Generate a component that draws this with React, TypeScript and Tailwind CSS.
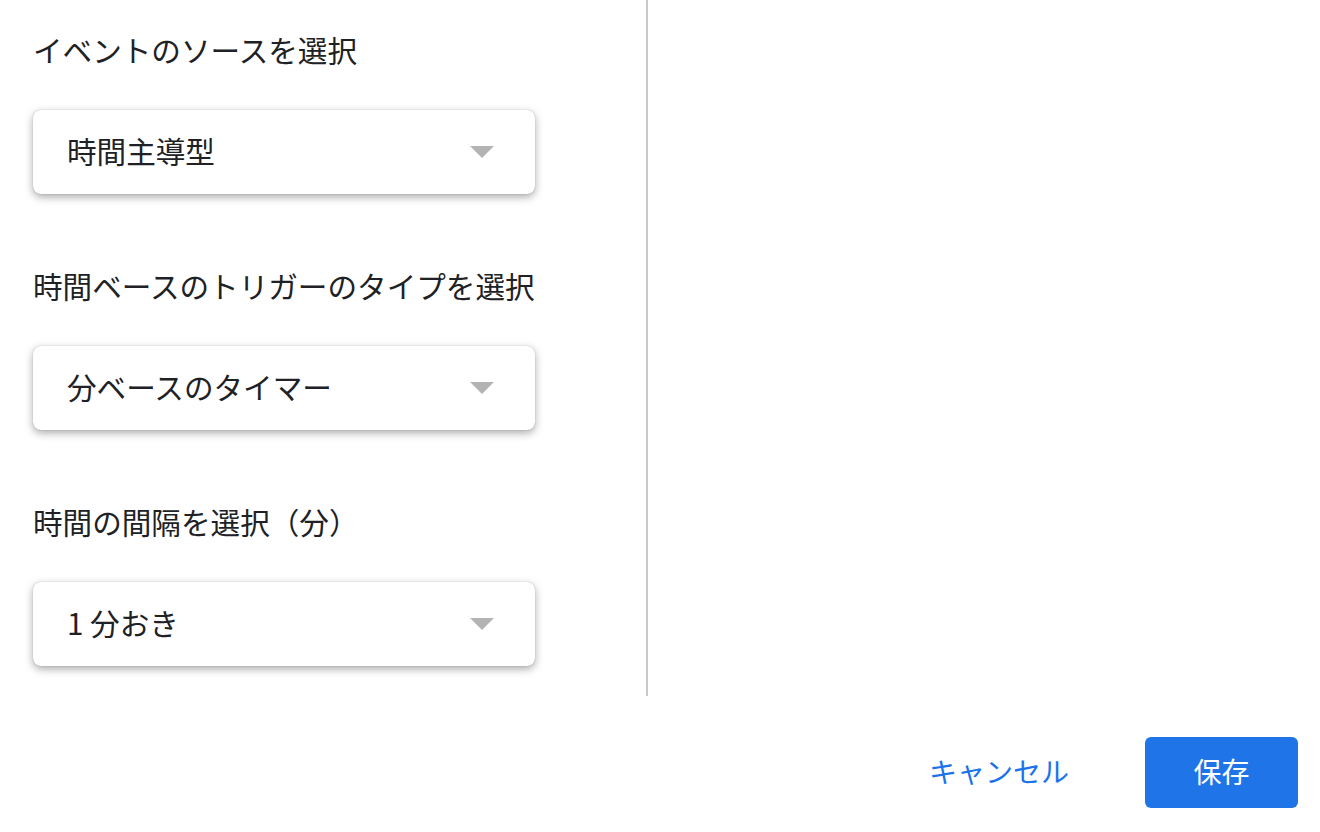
const font = { fontFamily: '"Noto Sans CJK JP", "Noto Sans", sans-serif' };

const fields = [
  { label: 'イベントのソースを選択', value: '時間主導型' },
  { label: '時間ベースのトリガーのタイプを選択', value: '分ベースのタイマー' },
  { label: '時間の間隔を選択（分）', value: '1 分おき' },
];

function Select({ value }: { value: string }) {
  return (
    <div className="flex h-[84px] w-[502px] items-center justify-between rounded-lg bg-white pb-[3px] pl-[34px] pr-[41px] shadow-[0_3px_8px_rgba(0,0,0,0.34),0_0_1px_rgba(0,0,0,0.3)]">
      <span className="text-[29.6px] leading-none text-[#202124]">{value}</span>
      <svg width="24" height="12" viewBox="0 0 24 12" className="mt-[2px]">
        <path d="M0 0 L24 0 L12 12 Z" fill="#b3b3b3" />
      </svg>
    </div>
  );
}

export default function App() {
  return (
    <div className="flex h-[832px] w-[1320px] flex-col bg-white" style={font}>
      <div className="flex h-[696px]">
        <div className="flex w-[646px] flex-col pl-[33px] pt-[30px]">
          {fields.map((f) => (
            <div key={f.label} className="mb-[72px] flex flex-col last:mb-0">
              <div className="mb-[40px] h-[40px] text-[29.6px] leading-[40px] text-[#202124]">{f.label}</div>
              <Select value={f.value} />
            </div>
          ))}
        </div>
        <div className="w-[2px] bg-[#c5c8cc]" />
        <div className="flex-1" />
      </div>
      <div className="flex items-start justify-end pr-[22px] pt-[41px]">
        <button className="mr-[38px] h-[71px] px-[38px] pb-[3px] text-[28px] text-[#1a73e8]">キャンセル</button>
        <button className="h-[71px] w-[153px] rounded-md bg-[#1f74e8] pb-[3px] text-[28px] text-white">保存</button>
      </div>
    </div>
  );
}
